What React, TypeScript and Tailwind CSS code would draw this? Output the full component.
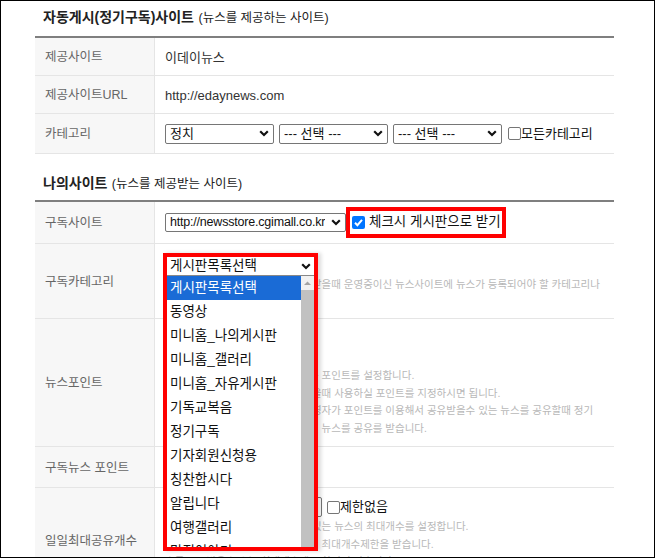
import React from "react";

const Chevron = () => (
  <svg width="10" height="7" viewBox="0 0 10 7" className="shrink-0">
    <path d="M1.2 1.3 L5 5 L8.8 1.3" fill="none" stroke="#111" strokeWidth="2.2" />
  </svg>
);

const Select = ({ text, className }: { text: string; className: string }) => (
  <div
    className={`flex items-center justify-between border border-[#767676] rounded-[2px] bg-white pl-[4px] pr-[4px] text-[#111] ${className}`}
  >
    <span className="whitespace-nowrap overflow-hidden">{text}</span>
    <Chevron />
  </div>
);

const Box = ({ checked }: { checked?: boolean }) =>
  checked ? (
    <span className="w-[13px] h-[13px] rounded-[2px] bg-[#0075ff] flex items-center justify-center shrink-0">
      <svg width="11" height="11" viewBox="0 0 11 11">
        <path d="M2 5.8 L4.4 8.2 L9 2.8" fill="none" stroke="white" strokeWidth="2" />
      </svg>
    </span>
  ) : (
    <span className="w-[13px] h-[13px] rounded-[2px] border border-[#767676] bg-white shrink-0" />
  );

const Row = ({
  label,
  h,
  children,
}: {
  label: string;
  h: string;
  children?: React.ReactNode;
}) => (
  <div className={`flex border-b border-[#e5e5e5] ${h}`}>
    <div className="w-[120px] shrink-0 bg-[#f7f7f7] border-r border-[#e5e5e5] flex items-center pl-[10px] pt-[2px] text-[12.5px] text-[#666]">
      {label}
    </div>
    <div className="flex-1 pl-[10px] flex flex-col justify-center relative">{children}</div>
  </div>
);

const Desc = ({ lines, className = "" }: { lines: string[]; className?: string }) => (
  <div className={`text-[10.5px] leading-[17.7px] text-[#b8b8b8] ${className}`}>
    {lines.map((l) => (
      <div key={l} className="whitespace-nowrap">
        {l}
      </div>
    ))}
  </div>
);

const boards = [
  "게시판목록선택",
  "동영상",
  "미니홈_나의게시판",
  "미니홈_갤러리",
  "미니홈_자유게시판",
  "기독교복음",
  "정기구독",
  "기자회원신청용",
  "칭찬합시다",
  "알립니다",
  "여행갤러리",
  "맛집이야기",
  "공지사항",
];

export default function App() {
  return (
    <div className="w-[655px] h-[558px] border border-black bg-white overflow-hidden font-['Liberation_Sans','Noto_Sans_CJK_KR',sans-serif]">
      <div className="ml-[34px] w-[579px]">
        {/* 자동게시 */}
        <div className="h-[35px] pt-[6px] pl-[8px] leading-[20px] text-[#222]">
          <span className="text-[14px] font-bold">자동게시(정기구독)사이트</span>{" "}
          <span className="text-[12.5px]">(뉴스를 제공하는 사이트)</span>
        </div>
        <div className="border-t-2 border-[#7f7f7f]" />
        <Row label="제공사이트" h="h-[38px]">
          <span className="text-[13px] text-[#333] pt-[2px]">이데이뉴스</span>
        </Row>
        <Row label="제공사이트URL" h="h-[38px]">
          <span className="text-[13px] text-[#333] pt-[2px]">http://edaynews.com</span>
        </Row>
        <Row label="카테고리" h="h-[40px]">
          <div className="flex items-center">
            <Select text="정치" className="w-[109px] h-[20px] text-[13px]" />
            <Select text="--- 선택 ---" className="w-[109px] h-[20px] ml-[5px] text-[13px]" />
            <Select text="--- 선택 ---" className="w-[109px] h-[20px] ml-[5px] text-[13px]" />
            <span className="ml-[6px] flex items-center text-[13px] text-[#111]">
              <Box />
              모든카테고리
            </span>
          </div>
        </Row>

        {/* 나의사이트 */}
        <div className="h-[46px] pt-[19px] pl-[8px] leading-[20px] text-[#222]">
          <span className="text-[14px] font-bold">나의사이트</span>{" "}
          <span className="text-[12.5px]">(뉴스를 제공받는 사이트)</span>
        </div>
        <div className="border-t-2 border-[#7f7f7f]" />
        <Row label="구독사이트" h="h-[42px]">
          <div className="flex items-center">
            <Select
              text="http://newsstore.cgimall.co.kr"
              className="w-[181px] h-[19px] text-[12.5px] tracking-[-0.2px]"
            />
            <div className="border-4 border-[#ff0000] h-[31px] w-[160px] flex items-center pl-[2px] text-[13.5px] text-[#111]">
              <Box checked />
              <span className="ml-[4px] whitespace-nowrap">체크시 게시판으로 받기</span>
            </div>
          </div>
        </Row>
        <Row label="구독카테고리" h="h-[75px]">
          <div className="flex flex-col justify-start h-full pt-[13px]">
            <div className="relative w-[147px] h-[17px] ml-[2px]">
              <div className="absolute left-[-4px] top-[-4px] w-[155px] h-[298px] border-4 border-[#ff0000] bg-white z-10 shadow-[3px_0_4px_rgba(0,0,0,0.15)]">
                <div className="h-[18px] flex items-center justify-between pl-[3px] pr-[3px] text-[13.5px] text-[#111]">
                  <span>게시판목록선택</span>
                  <Chevron />
                </div>
                <div className="h-[272px] border-t border-[#888] flex overflow-hidden">
                  <div className="flex-1 overflow-hidden">
                    {boards.map((b, i) => (
                      <div
                        key={b}
                        className={`h-[24px] flex items-center pl-[3px] text-[13.5px] whitespace-nowrap ${
                          i === 0 ? "bg-[#1a6bd6] text-white" : "text-[#111]"
                        }`}
                      >
                        {b}
                      </div>
                    ))}
                  </div>
                  <div className="w-[13px] bg-[#f1f1f1] flex flex-col items-center">
                    <svg width="9" height="14" viewBox="0 0 9 14" className="shrink-0">
                      <path d="M1 9 L4.5 5.5 L8 9 Z" fill="#a3a3a3" />
                    </svg>
                    <div className="w-[13px] flex-1 bg-[#c1c1c1]" />
                  </div>
                </div>
              </div>
            </div>
            <Desc
              className="mt-[2px]"
              lines={[
                "정기구독 뉴스들을 자동으로 공유 받을때 운영중이신 뉴스사이트에 뉴스가 등록되어야 할 카테고리나",
                "게시판을 선택합니다.",
              ]}
            />
          </div>
        </Row>
        <Row label="뉴스포인트" h="h-[128px]">
          <div className="flex flex-col justify-start h-full pt-[14px]">
            <div className="w-[120px] h-[22px] border border-[#ccc] mb-[12px]" />
            <Desc
              lines={[
                "정기구독 뉴스를 공유할때 차감되는 포인트를 설정합니다.",
                "뉴스사이트에서 구독 뉴스 공유 받을때 사용하실 포인트를 지정하시면 됩니다.",
                "정기구독 뉴스 제공하는 사이트 운영자가 포인트를 이용해서 공유받을수 있는 뉴스를 공유할때 정기",
                "구독으로 설정하신 카테고리의 최신 뉴스를 공유를 받습니다.",
              ]}
            />
          </div>
        </Row>
        <Row label="구독뉴스 포인트" h="h-[41px]">
          <div className="w-[120px] h-[22px] border border-[#ccc]" />
        </Row>
        <Row label="일일최대공유개수" h="h-[106px]">
          <div className="flex flex-col justify-start h-full pt-[9px]">
            <div className="flex items-center text-[13px] text-[#111] h-[20px]">
              <div className="w-[157px] h-[20px] border border-[#767676] rounded-[2px]" />
              <span className="ml-[5px] flex items-center">
                <Box />
                제한없음
              </span>
            </div>
            <Desc
              className="mt-[1px]"
              lines={[
                "하루에 정기구독으로 공유받을 수 있는 뉴스의 최대개수를 설정합니다.",
                "자동게시 정기구독 뉴스는 설정하신 최대개수제한을 받습니다.",
                "수동으로 받은 뉴스는 최대개수에 포함되지 않습니다.",
              ]}
            />
          </div>
        </Row>
      </div>
    </div>
  );
}
